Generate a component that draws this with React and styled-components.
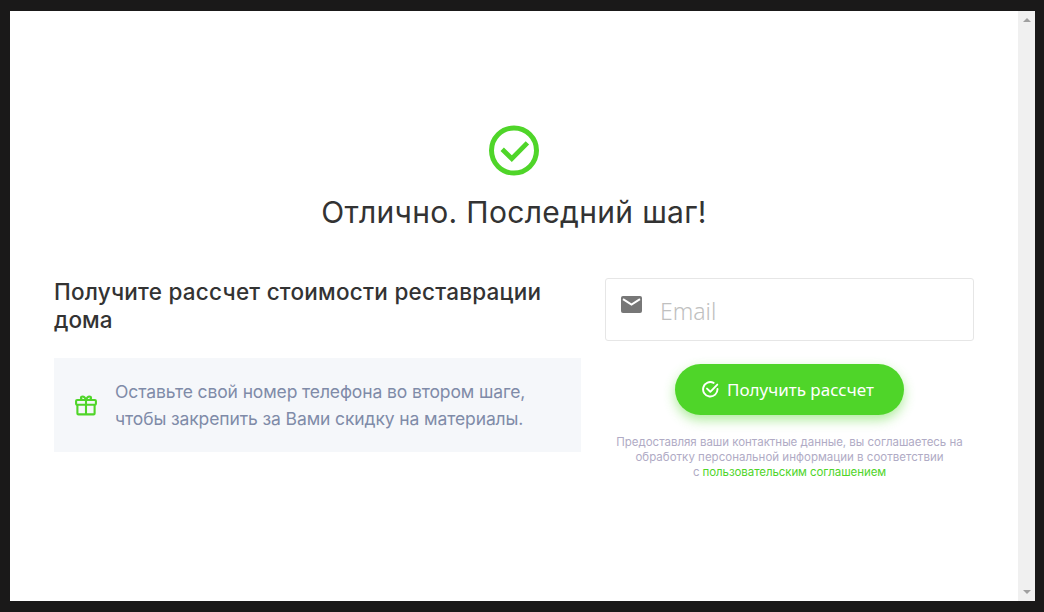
import React from 'react'
import styled, { createGlobalStyle } from 'styled-components'

const GlobalStyle = createGlobalStyle`
  * {
    box-sizing: border-box;
  }

  body {
    margin: 0;
    background-color: #1a1919;
    font-family: Inter, 'Open Sans', sans-serif;
  }
`

const Backdrop = styled.div`
  height: 612px;
  padding: 11px 9px 11px 10px;
  background-color: #1a1919;
  overflow: hidden;
`

const Modal = styled.div`
  display: flex;
  height: 590px;
  background-color: #fff;
`

const Content = styled.main`
  flex: 1;
  padding: 114px 44px 0;
`

const ScrollTrack = styled.div`
  display: flex;
  flex-direction: column;
  justify-content: space-between;
  align-items: center;
  width: 17px;
  padding: 7px 0;
  background-color: #f0f0f0;
`

const Arrow = styled.span`
  width: 0;
  height: 0;
  border: 4px solid transparent;
  border-top-width: ${(props) => (props.$down ? '4px' : '0')};
  border-bottom-width: ${(props) => (props.$down ? '0' : '4px')};
  border-${(props) => (props.$down ? 'top' : 'bottom')}-color: #a0a0a0;
`

const Header = styled.header`
  display: flex;
  flex-direction: column;
  align-items: center;
  height: 153px;

  svg {
    flex: none;
  }
`

const Title = styled.h1`
  margin: 16px 0 0;
  color: #333;
  font-size: 30px;
  font-weight: 400;
  line-height: 40px;
  white-space: nowrap;
`

const Columns = styled.div`
  display: grid;
  grid-template-columns: 527px 369px;
  column-gap: 24px;
  align-items: start;
`

const Subtitle = styled.h2`
  margin: 0 0 24px;
  color: #333;
  font-size: 22.5px;
  font-weight: 500;
  line-height: 28px;
  white-space: nowrap;
`

const Bonus = styled.div`
  display: flex;
  align-items: center;
  height: 94px;
  padding-left: 20px;
  background-color: #f5f7fa;
`

const BonusText = styled.p`
  margin: 0 0 0 17px;
  color: #7f8ba8;
  font-size: 17.5px;
  line-height: 27px;
  white-space: nowrap;
`

const Form = styled.form`
  display: flex;
  flex-direction: column;
  align-items: center;
`

const Field = styled.label`
  display: flex;
  align-items: center;
  width: 369px;
  height: 63px;
  padding-left: 15px;
  border: 1px solid #e6e6e6;
  border-radius: 3px;

  svg {
    flex: none;
    margin-bottom: 10px;
  }
`

const Input = styled.input`
  flex: 1;
  min-width: 0;
  height: 61px;
  margin-left: 18px;
  padding: 2px 0 0;
  border: 0;
  outline: 0;
  background: transparent;
  font-family: 'Noto Sans', 'Open Sans', sans-serif;
  font-size: 23px;

  &::placeholder {
    color: #c0c0c0;
    font-weight: 300;
  }
`

const SubmitBtn = styled.button`
  display: flex;
  align-items: center;
  width: 229px;
  height: 51px;
  margin-top: 23px;
  padding: 0 0 0 27px;
  border: 0;
  border-radius: 26px;
  background-color: #4fd529;
  box-shadow: 0 5px 12px rgba(79, 213, 41, 0.45);
  color: #fff;
  font-family: 'Noto Sans', 'Open Sans', sans-serif;
  font-size: 17px;
  white-space: nowrap;

  span {
    margin-left: 8px;
  }
`

const Terms = styled.p`
  margin: 20px 0 0;
  color: #b0abc5;
  font-size: 11.5px;
  line-height: 15px;
  text-align: center;
  white-space: nowrap;

  a {
    color: #4fd529;
    text-decoration: none;
  }
`

const Line = styled.span`
  display: block;
  letter-spacing: ${(props) => props.$spacing || 0}px;
`

function CheckIcon() {
  return (
    <svg width="50" height="51" viewBox="0 0 50 51" fill="none" stroke="#4fd529">
      <circle cx="25" cy="25.5" r="22.5" strokeWidth="5" />
      <path d="M13.2 24.2l9.6 9.4 15.6-15.7" strokeWidth="4.8" />
    </svg>
  )
}

function GiftIcon() {
  return (
    <svg width="24" height="24" viewBox="0 0 24 24" fill="none" stroke="#4fd529" strokeWidth="2.1">
      <rect x="2.1" y="7" width="19.8" height="4.8" rx="1" />
      <path d="M3.4 12v8.4a1 1 0 0 0 1 1h15.2a1 1 0 0 0 1-1V12M12 7v14.4" />
      <path d="M12 7c-.8-2.2-2-3.5-3.3-3.5-2.2 0-2.5 2.8 0 3.5M12 7c.8-2.2 2-3.5 3.3-3.5 2.2 0 2.5 2.8 0 3.5" />
    </svg>
  )
}

function MailIcon() {
  return (
    <svg width="21" height="17" viewBox="0 0 21 17">
      <rect width="21" height="17" rx="2" fill="#777" />
      <path d="M2 3.2l8.5 5.4L19 3.2" fill="none" stroke="#fff" strokeWidth="2" />
    </svg>
  )
}

function ButtonIcon() {
  return (
    <svg width="17" height="17" viewBox="0 0 17 17" fill="none" stroke="#fff" strokeWidth="1.9" strokeLinecap="round">
      <path d="M11.6 1.9A7.2 7.2 0 1 0 15.5 8" />
      <path d="M5 7.6l3.3 3.2 7-7.2" strokeLinejoin="round" />
    </svg>
  )
}

function App() {
  return (
    <React.Fragment>
      <GlobalStyle />
      <Backdrop>
        <Modal>
          <Content>
            <Header>
              <CheckIcon />
              <Title>
                <Line $spacing={0.32}>Отлично. Последний шаг!</Line>
              </Title>
            </Header>

            <Columns>
              <section>
                <Subtitle>
                  <Line $spacing={0.24}>Получите рассчет стоимости реставрации</Line>
                  <Line>дома</Line>
                </Subtitle>
                <Bonus>
                  <GiftIcon />
                  <BonusText>
                    <Line $spacing={-0.12}>Оставьте свой номер телефона во втором шаге,</Line>
                    <Line $spacing={-0.11}>чтобы закрепить за Вами скидку на материалы.</Line>
                  </BonusText>
                </Bonus>
              </section>

              <Form>
                <Field>
                  <MailIcon />
                  <Input type="email" placeholder="Email" />
                </Field>
                <SubmitBtn type="submit">
                  <ButtonIcon />
                  <span>Получить рассчет</span>
                </SubmitBtn>
                <Terms>
                  <Line $spacing={-0.02}>Предоставляя ваши контактные данные, вы соглашаетесь на</Line>
                  <Line $spacing={0.02}>обработку персональной информации в соответствии</Line>
                  <Line $spacing={-0.08}>
                    с <a href="#terms">пользовательским соглашением</a>
                  </Line>
                </Terms>
              </Form>
            </Columns>
          </Content>

          <ScrollTrack>
            <Arrow />
            <Arrow $down />
          </ScrollTrack>
        </Modal>
      </Backdrop>
    </React.Fragment>
  )
}

export default App
